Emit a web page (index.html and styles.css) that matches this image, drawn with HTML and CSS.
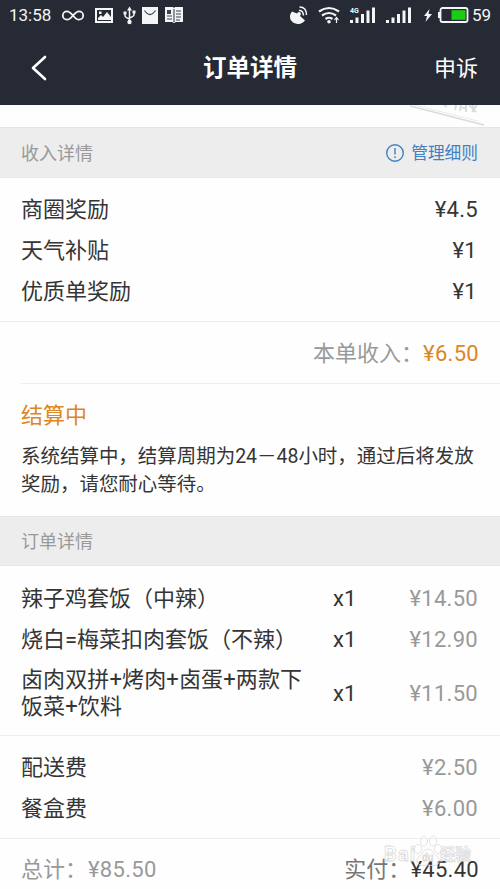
FILE: index.html
```html
<!DOCTYPE html>
<html lang="zh-CN">
<head>
<meta charset="utf-8">
<title>订单详情</title>
<link rel="stylesheet" href="styles.css">
</head>
<body>
<header class="header">
  <div class="status">
    <span class="clock">13:58</span>
    <svg class="status-left" width="126" height="32" viewBox="60 0 126 32">
      <path d="M73 15.500C70.500 12.500 69 11.300 67 11.300a4.200 4.200 0 0 0 0 8.400C69 19.700 70.500 18.500 73 15.500S77 11.300 79 11.300a4.200 4.200 0 0 1 0 8.400C77 19.700 75.500 18.500 73 15.500Z" fill="none" stroke="#f4f5f6" stroke-width="1.800"/>
      <path fill="#f4f5f6" fill-rule="evenodd" d="M95 8h18v15H95ZM97 10v11h14V10Z"/>
      <path fill="#f4f5f6" d="M98 20v-2l3-3 2 2 4-5 4 5v3ZM99 11.500h2.500V14H99Z"/>
      <g fill="none" stroke="#f4f5f6" stroke-width="1.500"><path d="M129.500 9v12M125 13v2.500q0 2 4.500 3.500M134 12v2.500q0 2-4.500 3.500"/></g>
      <path fill="#f4f5f6" d="m129.500 6.500 2.500 4h-5ZM123.500 11.500h3v3h-3ZM132.500 10.500h3v3h-3Z"/><circle cx="129.500" cy="22" r="2.200" fill="#f4f5f6"/>
      <path fill="#f4f5f6" d="M142 7h16v17h-16Z"/><path d="M144.500 10.500q5.500 8 11 0" fill="none" stroke="#434955" stroke-width="1.300"/>
      <path fill="#f4f5f6" d="M165 7h8l1 1 1-1h8v15h-7l-2 1-2-1h-7Z"/>
      <path d="M174 9v13M167 16h5M167 19h5M176 11h5M176 14h5M176 17h5M176 20h4" stroke="#3d424d" stroke-width="1.100"/><path fill="#3d424d" d="M167 10h4v4h-4Z"/>
    </svg>
    <svg class="status-right" width="184" height="32" viewBox="286 0 184 32">
      <path fill="#f4f5f6" d="M292 11.500q-4 5-.5 9.500t9.500 2.500q2.500-1 4-3l-5-4.500q2-3-.5-4-1.500-.5-2.500 1.500Z"/>
      <path d="M299 10.500q4-.5 4.500 5M299.500 7q7 0 7 8" fill="none" stroke="#f4f5f6" stroke-width="1.500"/>
      <g fill="none" stroke="#f4f5f6" stroke-width="2.200"><path d="M319 11.500q10-7 20 0M322 15.500q7-5 14 0M325.500 19q3.500-2.500 7 0"/></g><circle cx="329" cy="21.800" r="1.800" fill="#f4f5f6"/>
      <path d="M336.500 23v-5M334.500 20l2-2.500 2 2.500" fill="none" stroke="#f4f5f6" stroke-width="1.200"/>
      <text class="network" x="350" y="12.500">4G</text>
      <path fill="#f4f5f6" d="M350 20h3v3h-3ZM355.500 17.500h3V23h-3ZM361 14h3v9h-3ZM366.500 10.500h3V23h-3ZM372 7.500h3V23h-3ZM386 20h3v3h-3ZM391.500 17.500h3V23h-3ZM397 14h3v9h-3ZM402.500 10.500h3V23h-3ZM408 7.500h3V23h-3Z"/>
      <path fill="#f4f5f6" d="m429.500 9-5.500 7h3l-1.500 6 6.500-8h-3.500Z"/>
      <rect x="440.500" y="8" width="27" height="14" rx="2" fill="none" stroke="#f4f5f6" stroke-width="1.800"/><path fill="#f4f5f6" d="M438 12h2v6h-2Z"/><path fill="#19ce13" d="M451.500 10.200h14v9.600h-14Z"/>
    </svg>
    <span class="battery">59</span>
  </div>
  <nav class="nav">
    <svg class="back" width="20" height="26" viewBox="0 0 20 26"><path d="M15 2 3 13l12 11" fill="none" stroke="#fff" stroke-width="2.600" stroke-linecap="round" stroke-linejoin="round"/></svg>
    <h1 class="title">订单详情</h1>
    <span class="appeal">申诉</span>
  </nav>
</header>
<div class="gap">
  <svg width="92" height="22" viewBox="408 105 92 22"><path d="m410 106 74 19" stroke="#dadada" stroke-width="1.500"/><path d="m410 104 68 17" stroke="#e4e4e4" stroke-width=".800"/><path d="m444 105 3 2M456 105l-1 5M461 105l-1 6M466 105v7M462 108h5M469 105l7 7M477 105l-5 7M473 105l1 7" stroke="#dcdcdc" stroke-width="2"/></svg>
</div>
<section>
  <div class="bar"><span>收入详情</span>
    <a class="rules"><svg width="20" height="20" viewBox="0 0 20 20"><circle cx="10" cy="10" r="8.300" fill="none" stroke="#4080c4" stroke-width="1.400"/><path d="M10 5v6.500M10 13.200v1.700" stroke="#4080c4" stroke-width="1.400"/></svg>管理细则</a>
  </div>
  <div class="rows income">
    <div class="row"><span>商圈奖励</span><span class="amount">¥4.5</span></div>
    <div class="row"><span>天气补贴</span><span class="amount one">¥1</span></div>
    <div class="row"><span>优质单奖励</span><span class="amount one">¥1</span></div>
  </div>
  <div class="sum"><span class="muted">本单收入：</span><span class="amount orange">¥6.50</span></div>
  <div class="notice">
    <h2 class="orange">结算中</h2>
    <p>系统结算中，结算周期为24－48小时，通过后将发放奖励，请您耐心等待。</p>
  </div>
</section>
<section>
  <div class="bar order-bar"><span>订单详情</span></div>
  <div class="rows items">
    <div class="row item"><span>辣子鸡套饭（中辣）</span><span>x1</span><span class="amount muted">¥14.50</span></div>
    <div class="row item"><span>烧白=梅菜扣肉套饭（不辣）</span><span>x1</span><span class="amount muted">¥12.90</span></div>
    <div class="row item long"><span>卤肉双拼+烤肉+卤蛋+两款下<br>饭菜+饮料</span><span>x1</span><span class="amount muted">¥11.50</span></div>
  </div>
  <div class="rows fees">
    <div class="row"><span>配送费</span><span class="amount muted">¥2.50</span></div>
    <div class="row"><span>餐盒费</span><span class="amount muted">¥6.00</span></div>
  </div>
  <div class="total">
    <span class="muted">总计：<span class="amount total-amount">¥85.50</span></span>
    <span><span class="paid-label">实付：</span><span class="amount">¥45.40</span></span>
    <svg class="watermark" width="92" height="44" viewBox="0 0 92 44">
      <g class="mark"><text class="latin" x="0" y="26" textLength="31">Bai</text><text class="cjk" x="56" y="25" textLength="31">经验</text>
      <ellipse cx="34" cy="14" rx="3.500" ry="4.500"/><ellipse cx="40" cy="6" rx="3.500" ry="5"/><ellipse cx="49" cy="6" rx="3.500" ry="5"/><ellipse cx="54" cy="14" rx="3.500" ry="4.500"/><path d="M44 14q-4 0-6 5-6 4-5 8 2 5 11 3 10 2 11-3 1-4-5-8-2-5-6-5Z"/><text class="du" x="38" y="26">du</text></g>
    </svg>
  </div>
</section>
</body>
</html>
```
FILE: styles.css
```css
* { box-sizing: border-box; }
body {
  margin: 0;
  height: 889px;
  overflow: hidden;
  background: #fefefe;
  color: #353535;
  font: 22px/41px Roboto, "Noto Sans CJK SC", sans-serif;
}
.header { height: 105px; background: #252a34; color: #fff; }
.status {
  display: flex;
  height: 32px;
  padding: 0 9px;
  font-size: 17px;
  line-height: 31px;
  color: #f4f5f6;
}
.clock { width: 51px; }
.status-right { margin-left: auto; }
.battery { width: 19px; margin-left: 2px; }
.network { font: 700 7px Roboto, sans-serif; fill: #f4f5f6; }
.nav {
  display: grid;
  grid-template-columns: 1fr auto 1fr;
  align-items: center;
  height: 72px;
  padding: 0 22px 0 30px;
}
.title { margin: 0 8px 0 0; font-size: 23.500px; font-weight: 700; }
.appeal { justify-self: end; }
.gap { display: flex; justify-content: flex-end; height: 22px; }
.bar {
  display: flex;
  justify-content: space-between;
  align-items: center;
  height: 51px;
  padding: 2px 22px 0 21px;
  background: #ededed;
  border-top: 1px solid #e5e5e5;
  border-bottom: 1px solid #e8e8e8;
  color: #999;
  font-size: 18px;
}
.rules { display: flex; align-items: center; gap: 6px; color: #4080c4; font-size: 16.700px; }
.rules svg { margin-bottom: 2px; }
.rows { padding: 0 22px 0 21px; border-bottom: 1px solid #eee; }
.row { display: flex; justify-content: space-between; height: 41px; }
.income { height: 144px; padding-top: 11px; }
.amount { letter-spacing: .3px; }
.one { padding-right: 1px; }
.muted { color: #999; }
.orange { color: #dd8622; }
.sum {
  display: flex;
  justify-content: flex-end;
  height: 62px;
  margin-left: 21px;
  padding: 11px 21px 0 0;
  border-bottom: 1px solid #eee;
}
.notice { height: 132px; padding: 11px 20px 0 21px; }
.notice h2 { margin: 0; font-size: 22px; font-weight: 400; }
.notice p { margin: 7px 0 0; font-size: 19.480px; line-height: 28px; }
.order-bar { height: 50px; padding-top: 0; }
.items { height: 170px; padding-top: 12px; }
.item { display: grid; grid-template-columns: 312px 50px 1fr; }
.item .amount { text-align: right; }
.long { height: 66px; align-items: center; }
.long span:first-child { line-height: 27px; letter-spacing: .12px; }
.fees { height: 103px; padding-top: 11px; }
.total {
  position: relative;
  display: flex;
  justify-content: space-between;
  padding: 10px 21px 0;
}
.total-amount { margin-left: 1px; }
.paid-label { color: #777; }
.watermark { position: absolute; right: 24px; top: -4px; }
.mark { fill: none; stroke: #dcdcdc; stroke-width: .8; }
.latin { font: 700 20px Roboto, sans-serif; }
.cjk { font: 700 15.500px "Noto Sans CJK SC", sans-serif; }
.du { font: 10px Roboto, sans-serif; }
```
